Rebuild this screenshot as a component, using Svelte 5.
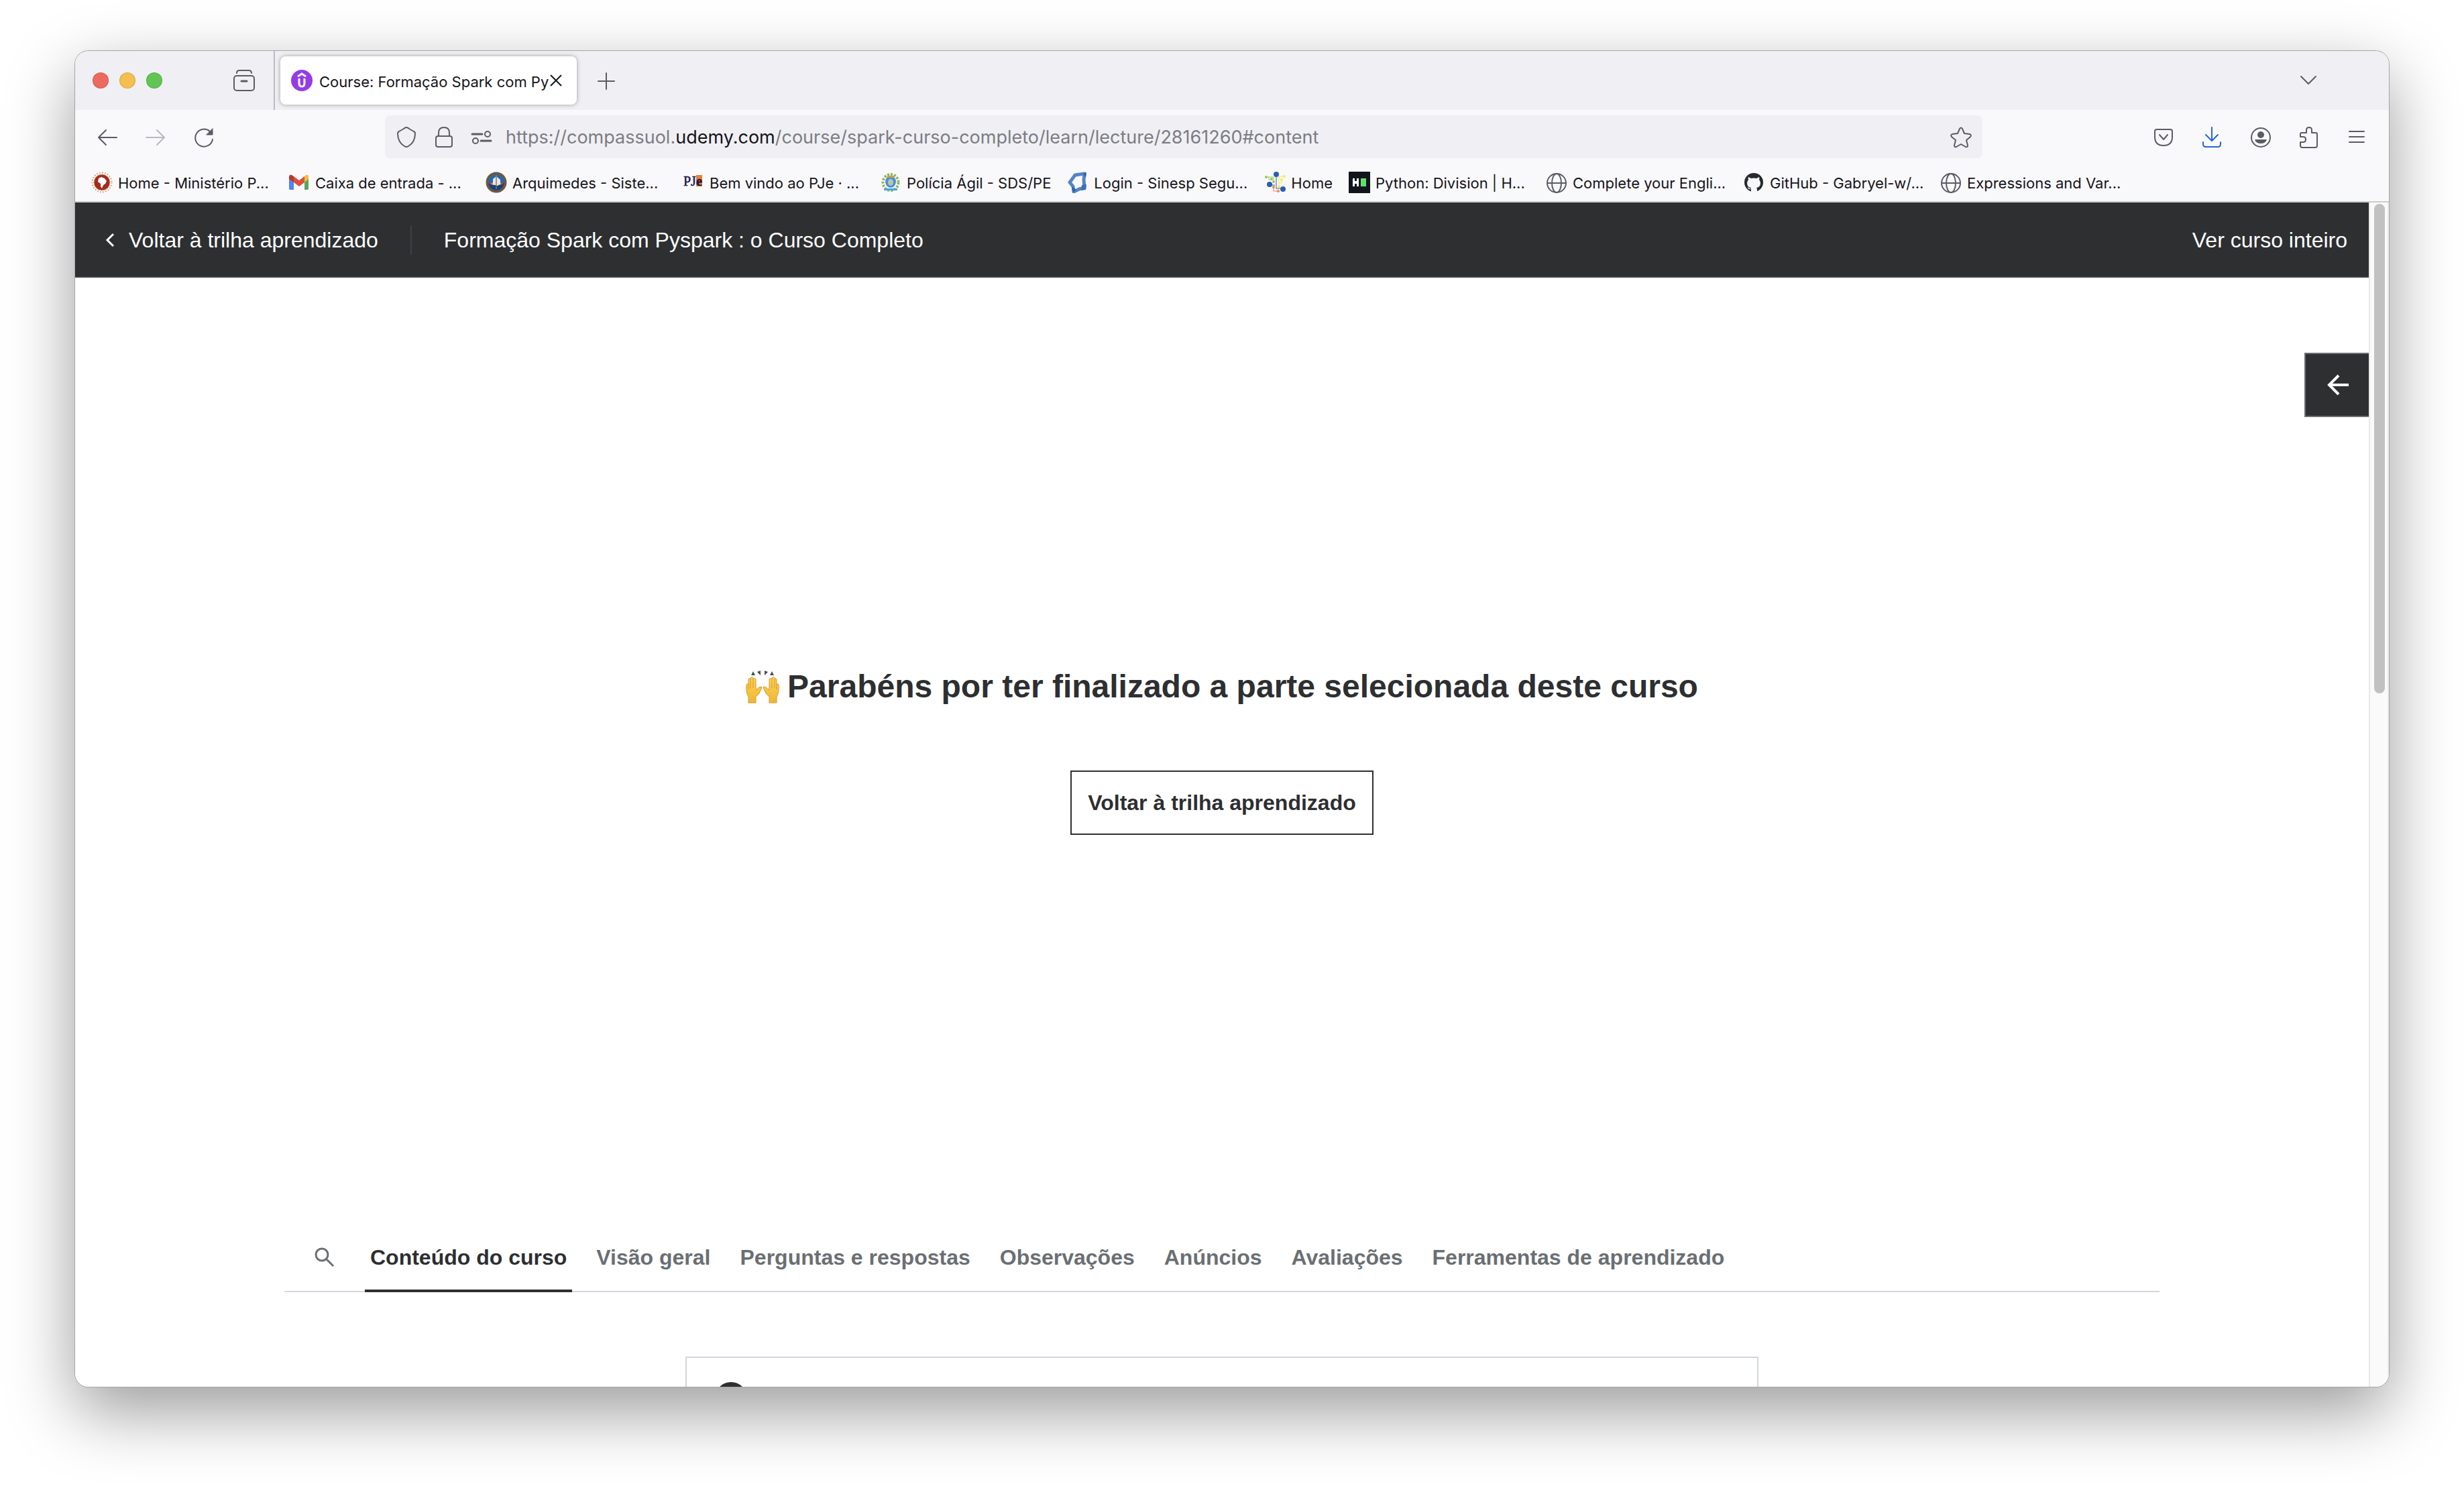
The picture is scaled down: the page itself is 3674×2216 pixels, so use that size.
<script>
  const bookmarks = [
    { label: 'Home - Ministério P...', icon: 'seal', wide: true },
    { label: 'Caixa de entrada - ...', icon: 'gmail', wide: true },
    { label: 'Arquimedes - Siste...', icon: 'arquimedes', wide: true },
    { label: 'Bem vindo ao PJe · ...', icon: 'pje', wide: true },
    { label: 'Polícia Ágil - SDS/PE', icon: 'police', wide: false },
    { label: 'Login - Sinesp Segu...', icon: 'sinesp', wide: true },
    { label: 'Home', icon: 'circuit', wide: false },
    { label: 'Python: Division | H...', icon: 'hackerrank', wide: true },
    { label: 'Complete your Engli...', icon: 'globe', wide: true },
    { label: 'GitHub - Gabryel-w/...', icon: 'github', wide: true },
    { label: 'Expressions and Var...', icon: 'globe', wide: true }
  ];
  const tabs = [
    'Conteúdo do curso',
    'Visão geral',
    'Perguntas e respostas',
    'Observações',
    'Anúncios',
    'Avaliações',
    'Ferramentas de aprendizado'
  ];
  let active = $state(0);
</script>

{#snippet favicon(name)}
  <svg class="ico" viewBox="0 0 32 32" aria-hidden="true">
    {#if name === 'seal'}
      <circle cx="16" cy="16" r="14.5" fill="none" stroke="#c39a68" stroke-width="2" stroke-dasharray="1.5 2.5" />
      <circle cx="16" cy="16" r="12" fill="#a32a24" stroke="#d9b27c" stroke-width="1" />
      <path d="M11 10l4-2 5 2 3 4-2 4-3 2-2 5-2-3v-4l-4-3z" fill="#fff" />
    {:else if name === 'gmail'}
      <path d="M2 27h6V14L1 8v17a2 2 0 0 0 1 2z" fill="#4f86ec" />
      <path d="M24 27h5a2 2 0 0 0 1-2V8l-6 6z" fill="#58a65c" />
      <path d="M24 7l2-2q4-1 4 3v3l-6 5z" fill="#f2be42" />
      <path d="M8 7L5 5Q1 4 1 8v3l7 5z" fill="#b63a2c" />
      <path d="M8 7l8 6 8-6v9l-8 6-8-6z" fill="#d95140" />
    {:else if name === 'arquimedes'}
      <circle cx="16" cy="16" r="14" fill="#2868a8" stroke="#7a5632" stroke-width="3" />
      <path d="M4 17q5 2 24 0-2 10-12 11Q6 27 4 17z" fill="#1c3f7c" />
      <path d="M6 18l5-2 10 0 5 2-5 2H11z" fill="#c8a23c" />
      <path d="M11 11l5-4 6 5v6l-4 3-7-2z" fill="#e3e8ec" />
      <path d="M16 5v21" stroke="#8a7a52" stroke-width="1.5" />
      <path d="M6 17l3 2M26 17l-3 2" stroke="#cf3b2c" stroke-width="2" />
    {:else if name === 'pje'}
      <rect x="20" y="5" width="9" height="17" fill="#ee7f2d" />
      <text x="1" y="21" class="pje">PJ</text>
      <text x="20" y="21" class="pje e">e</text>
    {:else if name === 'police'}
      <ellipse cx="16" cy="16" rx="11.5" ry="12" fill="none" stroke="#8fb45a" stroke-width="4" stroke-dasharray="3 2" />
      <ellipse cx="16" cy="15" rx="8" ry="9" fill="#4f8fd6" />
      <path d="M11 6h10v3H11z" fill="#c4a24a" />
      <ellipse cx="16" cy="16" rx="4" ry="5" fill="#9fcbe6" />
      <path d="M14 14h4v5h-4z" fill="#d7c94c" />
      <path d="M6 25h20v3H6z" fill="#4aa5e8" />
    {:else if name === 'sinesp'}
      <path d="M12 5l14-2-1 9 1 12-8 2-8 4-1-8-5-6z" fill="none" stroke="#5585c2" stroke-width="5" stroke-linejoin="round" />
      <path d="M24 3l5-2-1 8z" fill="#2f63ab" />
      <path d="M7 22l2 9 5-4z" fill="#2f63ab" />
      <path d="M22 20l7-1-1 8-7 1z" fill="#3c71b5" />
    {:else if name === 'circuit'}
      <g fill="none" stroke-width="1">
        <path d="M18 5v20h10" stroke="#2860ae" />
        <path d="M8 20h8" stroke="#2860ae" />
        <path d="M3 8h11v7M7 8v4h4" stroke="#9cc65a" />
        <path d="M30 7h-8v16M26 12v5h-4" stroke="#f5ea4e" />
        <path d="M14 22v7h8" stroke="#ea8a45" />
      </g>
      <circle cx="18" cy="4" r="4" fill="#2860ae" />
      <circle cx="8" cy="19" r="4" fill="#2860ae" />
      <circle cx="28" cy="26" r="4" fill="#2860ae" />
      <g fill="#9cc65a"><circle cx="3" cy="8" r="2" /><circle cx="11" cy="11" r="2" /><circle cx="14" cy="15" r="2" /></g>
      <g fill="#f7ec4c"><circle cx="30" cy="7" r="2" /><circle cx="26" cy="12" r="2" /><circle cx="22" cy="22" r="2" /></g>
      <g fill="#ea8a45"><circle cx="14" cy="23" r="2" /><circle cx="21" cy="29" r="2" /></g>
    {:else if name === 'hackerrank'}
      <rect width="32" height="32" fill="#10151d" />
      <path d="M6 10h3v4h3v-4h3v12h-3v-4H9v4H6z" fill="#fff" />
      <rect x="18" y="10" width="8" height="12" fill="#5fe36c" />
    {:else if name === 'github'}
      <circle cx="16" cy="16" r="14" fill="#26292d" />
      <path d="M12 30v-4q-4 1-5-2l-1-1 3 1q2 3 3 0-6-1-6-7 0-3 2-5-1-2 0-4l4 2q4-1 8 0l4-2q1 2 0 4 2 2 2 5 0 6-6 7 1 1 1 3v3q-4 2-9 0z" fill="#f7f7f9" />
    {:else}
      <g fill="none" stroke="#5b5b66" stroke-width="2">
        <circle cx="16" cy="17" r="14" />
        <ellipse cx="16" cy="17" rx="7" ry="14" />
        <path d="M2 17h28" />
      </g>
    {/if}
  </svg>
{/snippet}

<div class="desktop">
  <div class="window">
    <header class="titlebar">
      <div class="lights" aria-hidden="true"><i class="red"></i><i class="amber"></i><i class="green"></i></div>
      <button class="tool view" aria-label="Firefox View">
        <svg class="ico line" viewBox="0 0 32 32"><path d="M5 5q0-4 4-4h14q4 0 4 4" /><rect x="1" y="9" width="30" height="22" rx="4" /><path d="M12 17h8" stroke-width="3" /></svg>
      </button>
      <div class="tab">
        <svg class="ico" viewBox="0 0 32 32" aria-hidden="true">
          <circle cx="16" cy="16" r="16" fill="#963ce6" />
          <path d="M10 10l6-4 6 4" fill="none" stroke="#fff" stroke-width="3" />
          <path d="M12 13v7q0 5 4 5t4-5v-7" fill="none" stroke="#fff" stroke-width="3" />
        </svg>
        <span class="tab-title">Course: Formação Spark com Py</span>
        <button class="close" aria-label="Fechar aba"><svg viewBox="0 0 18 18"><path d="M1 1l16 16M17 1L1 17" /></svg></button>
      </div>
      <button class="tool plus" aria-label="Nova aba"><svg class="ico line" viewBox="0 0 32 32"><path d="M16 5v24M4 17h24" /></svg></button>
      <button class="tool list" aria-label="Listar abas"><svg class="ico line" viewBox="0 0 32 32"><path d="M5 10l11 11 11-11" /></svg></button>
    </header>

    <nav class="toolbar" aria-label="Navegação">
      <div class="nav-left">
        <button class="tool" aria-label="Voltar"><svg class="ico line" viewBox="0 0 32 32"><path d="M30 16H3M14 5L3 16l11 11" /></svg></button>
        <button class="tool faded" aria-label="Avançar"><svg class="ico line" viewBox="0 0 32 32"><path d="M2 16h27M18 5l11 11-11 11" /></svg></button>
        <button class="tool" aria-label="Recarregar"><svg class="ico line" viewBox="0 0 32 32"><path d="M29 19a13 13 0 1 1-4-12l3 3" /><path d="M29 3v9h-9z" fill="#5b5b66" stroke-width="1" /></svg></button>
      </div>
      <div class="urlbar">
        <svg class="ico line" viewBox="0 0 32 32" aria-hidden="true"><path d="M16 1q2 0 4 2l7 4q2 1 2 3 0 13-10 19-3 2-6 0Q3 23 3 10q0-2 2-3l7-4q2-2 4-2z" /></svg>
        <svg class="ico line" viewBox="0 0 32 32" aria-hidden="true"><path d="M8 14V9q0-8 8-8t8 8v5" /><rect x="4" y="14" width="24" height="16" rx="3" /></svg>
        <svg class="ico line" viewBox="0 0 32 32" aria-hidden="true"><path d="M2 11h15M15 21h15" stroke-width="3" /><circle cx="25" cy="11" r="4" /><circle cx="7" cy="21" r="4" /></svg>
        <div class="url">https://compassuol.<b>udemy.com</b>/course/spark-curso-completo/learn/lecture/28161260#content</div>
        <button class="tool" aria-label="Favoritar"><svg class="ico line" viewBox="0 0 32 32"><path d="M14 3q2-3 4 0l3 7 8 1q3 1 1 4l-6 5 2 8q0 3-3 2l-7-4-7 4q-3 1-3-2l2-8-6-5q-2-3 1-4l8-1z" /></svg></button>
      </div>
      <div class="nav-right">
        <button class="tool" aria-label="Pocket"><svg class="ico line" viewBox="0 0 32 32"><path d="M6 4h20q3 0 3 3v8q0 13-13 13T3 15V7q0-3 3-3z" /><path d="M10 12l6 7 6-7" /></svg></button>
        <button class="tool blue" aria-label="Downloads"><svg class="ico line" viewBox="0 0 32 32"><path d="M16 1v20M7 12l9 9 9-9M3 23v3q0 4 4 4h18q4 0 4-4v-3" /></svg></button>
        <button class="tool" aria-label="Conta"><svg class="ico line" viewBox="0 0 32 32"><circle cx="17" cy="16" r="14" /><circle cx="17" cy="12" r="5" class="solid" /><path d="M8 19h18q-2 6-9 6t-9-6z" class="solid" /></svg></button>
        <button class="tool" aria-label="Extensões"><svg class="ico line" viewBox="0 0 32 32"><path d="M13 9V5q0-4 4-4t4 4v4h6q2 0 2 2v17q0 3-3 3H7q-3 0-3-3v-5h4q4 0 4-4t-4-4H4v-4q0-2 2-2z" /></svg></button>
        <button class="tool" aria-label="Menu"><svg class="ico line" viewBox="0 0 32 32"><path d="M5 7h22M5 15h22M5 23h22" /></svg></button>
      </div>
    </nav>

    <nav class="bookmarks" aria-label="Favoritos">
      {#each bookmarks as b}
        <a href="#content" class:wide={b.wide}>{@render favicon(b.icon)}<span>{b.label}</span></a>
      {/each}
    </nav>

    <div class="viewport">
      <main class="page">
        <div class="course-bar">
          <a href="#trilha" class="back"><svg viewBox="0 0 16 24" aria-hidden="true"><path d="M13 3L4 12l9 9" /></svg>Voltar à trilha aprendizado</a>
          <span class="course">Formação Spark com Pyspark : o Curso Completo</span>
          <a href="#curso" class="whole">Ver curso inteiro</a>
        </div>

        <section class="stage">
          <button class="drawer" aria-label="Abrir conteúdo"><svg viewBox="0 0 32 32"><path d="M32 16H3M17 2L3 16l14 14" /></svg></button>
          <h1>
            <svg viewBox="0 0 50 50" aria-hidden="true">
              <defs>
                <linearGradient id="skin" x1="0" y1="0" x2="0" y2="1"><stop offset="0" stop-color="#fbd557" /><stop offset="1" stop-color="#f0b532" /></linearGradient>
                <g id="hand">
                  <path d="M4 49V40Q0 34 1 22q2-3 3 0V14q2-3 3 0V12q2-3 4 0v2q2-3 4 0v12l1 4q3-5 7-5 2 1 0 3-2 8-8 12v9z" fill="url(#skin)" stroke="#d9962c" stroke-width="1" />
                  <path d="M4 22v7M7 14v13M11 14v13" stroke="#d9962c" stroke-width="1" fill="none" />
                </g>
              </defs>
              <use href="#hand" />
              <use href="#hand" transform="matrix(-1 0 0 1 50 0)" />
              <path d="M8 8l3-6 3 6zM17 3l5-2v7zM28 1l5 2-5 5zM36 8l3-6 3 6z" fill="#4c4c4c" />
            </svg>
            <span>Parabéns por ter finalizado a parte selecionada deste curso</span>
          </h1>
          <button class="return">Voltar à trilha aprendizado</button>
        </section>

        <div class="tabs" role="tablist">
          <button class="search" aria-label="Pesquisar"><svg viewBox="0 0 32 32"><circle cx="12" cy="12" r="9" /><path d="M19 19l10 10" /></svg></button>
          {#each tabs as t, i}
            <button role="tab" class="tab-item" aria-selected={active === i} class:active={active === i} onclick={() => (active = i)}>{t}</button>
          {/each}
        </div>

        <section class="card"><span class="dot"></span></section>
      </main>
      <div class="scrollbar" aria-hidden="true"><div class="thumb"></div></div>
    </div>
  </div>
</div>

<style>
  :global(body) { margin: 0; background: #fff; }
  .desktop {
    box-sizing: border-box;
    height: 100vh;
    padding: 76px 112px 148px;
    display: flex;
    overflow: hidden;
    font-family: Inter, "Liberation Sans", sans-serif;
    color: #15141a;
  }
  .window {
    flex: 1;
    min-width: 0;
    display: flex;
    flex-direction: column;
    overflow: hidden;
    border-radius: 20px;
    background: #f9f9fb;
    box-shadow: 0 0 0 1px #a6a6a6, 0 36px 100px rgba(0, 0, 0, 0.4);
  }
  button { border: 0; padding: 0; margin: 0; background: none; font: inherit; color: inherit; cursor: pointer; }
  a { color: inherit; text-decoration: none; }
  svg { display: block; flex: none; }
  .ico { width: 32px; height: 32px; }
  .line { fill: none; stroke: #5b5b66; stroke-width: 2; stroke-linecap: round; stroke-linejoin: round; }
  .line .solid { fill: #5b5b66; stroke: none; }
  .blue .line { stroke: #2a62dc; }
  .faded { opacity: 0.4; }
  .pje { font: 20px "Liberation Serif", serif; fill: #17174f; stroke: #17174f; stroke-width: 0.5; }
  .e { font-weight: 700; }

  .titlebar { flex: none; height: 88px; display: flex; align-items: center; background: #f0f0f4; }
  .lights { display: flex; gap: 16px; padding-left: 26px; }
  .lights i { box-sizing: border-box; width: 24px; height: 24px; border-radius: 50%; border: 1px solid rgba(0, 0, 0, 0.12); }
  .red { background: #ec6a5e; }
  .amber { background: #f4bf4f; }
  .green { background: #61c554; }
  .view { align-self: stretch; margin-left: 94px; padding: 0 28px 0 12px; border-right: 2px solid #bcbcc0; }
  .tab {
    box-sizing: border-box;
    width: 442px;
    height: 72px;
    margin-left: 8px;
    padding: 0 22px 0 16px;
    display: flex;
    align-items: center;
    background: #fff;
    border-radius: 8px;
    box-shadow: 0 0 6px rgba(0, 0, 0, 0.35);
  }
  .tab-title { flex: 1; margin-left: 10px; padding-top: 4px; white-space: nowrap; font-size: 22px; line-height: 32px; }
  .close svg { width: 18px; height: 18px; fill: none; stroke: #15141a; stroke-width: 2; }
  .plus { margin-left: 28px; }
  .list { margin: 0 104px 0 auto; }

  .toolbar { flex: none; height: 80px; display: flex; align-items: center; }
  .nav-left { display: flex; gap: 40px; padding: 2px 0 0 32px; width: 430px; }
  .urlbar {
    box-sizing: border-box;
    flex: 1;
    min-width: 0;
    height: 64px;
    padding: 2px 16px 0;
    display: flex;
    align-items: center;
    gap: 24px;
    background: #f0f0f4;
    border-radius: 8px;
  }
  .url { flex: 1; min-width: 0; margin-left: -4px; overflow: hidden; white-space: nowrap; font-size: 27px; line-height: 40px; color: #7c7c85; }
  .url b { font-weight: 400; color: #15141a; }
  .nav-right { display: flex; gap: 40px; padding: 2px 32px 0 254px; }

  .bookmarks {
    flex: none;
    height: 56px;
    padding-left: 24px;
    display: flex;
    align-items: center;
    gap: 24px;
    overflow: hidden;
    border-bottom: 2px solid #cccccc;
    font-size: 22px;
    line-height: 32px;
    white-space: nowrap;
  }
  .bookmarks a { display: flex; align-items: center; gap: 8px; }
  .bookmarks .wide { width: 270px; }
  .bookmarks span { padding-top: 2px; }

  .viewport { flex: 1; min-height: 0; display: flex; background: #fff; }
  .page { flex: 1; min-width: 0; overflow: hidden; font-family: "Liberation Sans", Arial, sans-serif; font-size: 32px; line-height: 44px; color: #2d2f31; }
  .course-bar {
    box-sizing: border-box;
    height: 112px;
    padding: 2px 32px 0 44px;
    display: flex;
    align-items: center;
    background: #2d2f31;
    border-bottom: 2px solid #3e4143;
    color: #fff;
  }
  .back { display: flex; align-items: center; gap: 20px; padding-right: 48px; border-right: 2px solid #3e4143; }
  .back svg { width: 16px; height: 24px; fill: none; stroke: #fff; stroke-width: 3; }
  .course { padding-left: 48px; }
  .whole { margin-left: auto; }

  .stage { position: relative; min-height: 1412px; display: flex; flex-direction: column; align-items: center; justify-content: center; }
  .drawer {
    position: absolute;
    top: 112px;
    right: 0;
    box-sizing: border-box;
    width: 96px;
    height: 96px;
    padding-left: 32px;
    background: #2d2f31;
    border: 2px solid #6a6f73;
    border-right: 0;
  }
  .drawer svg { width: 32px; height: 32px; fill: none; stroke: #fff; stroke-width: 4; }
  h1 { margin: 0 0 96px; display: flex; align-items: center; gap: 12px; font-size: 48px; line-height: 58px; font-weight: 700; }
  h1 svg { width: 50px; height: 50px; }
  .return { height: 96px; padding: 0 24px; border: 2px solid #2d2f31; box-sizing: border-box; font-weight: 700; }

  .tabs { height: 99px; margin: 0 312px; padding-left: 32px; display: flex; gap: 28px; border-bottom: 2px solid #d1d7dc; font-weight: 700; color: #6a6f73; }
  .search { padding: 0 16px 2px 12px; }
  .search svg { width: 32px; height: 32px; fill: none; stroke: #6a6f73; stroke-width: 3; }
  .tab-item { padding: 0 8px; margin-bottom: -2px; border-bottom: 4px solid transparent; white-space: nowrap; }
  .tab-item.active { color: #2d2f31; border-color: #2d2f31; }

  .card { box-sizing: border-box; max-width: 1600px; min-height: 320px; margin: 96px auto 0; padding: 36px 40px; border: 2px solid #d1d7dc; }
  .dot { display: block; width: 48px; height: 48px; margin-left: 2px; border-radius: 50%; background: #2d2f31; }

  .scrollbar { flex: none; width: 16px; padding: 2px 4px 0 6px; background: #fafafa; border-left: 2px solid #e8e8e8; border-right: 2px solid #ededed; }
  .thumb { height: 730px; border-radius: 8px; background: #c1c1c1; }
</style>
